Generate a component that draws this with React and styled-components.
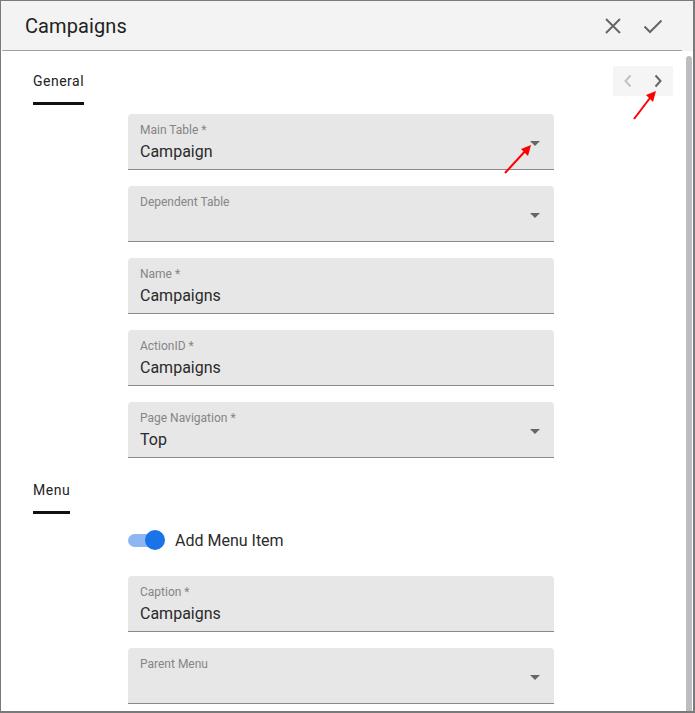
import React from 'react';
import styled, { createGlobalStyle } from 'styled-components';

const GlobalStyle = createGlobalStyle`
  html, body {
    margin: 0;
    padding: 0;
    background: #ffffff;
  }
  body {
    font-family: Roboto, 'Liberation Sans', sans-serif;
  }
`;

const Frame = styled.div`
  position: relative;
  box-sizing: border-box;
  width: 695px;
  height: 713px;
  border: 1px solid #7a7a7a;
  border-right-width: 2px;
  border-bottom-width: 2px;
  display: flex;
  flex-direction: column;
  overflow: hidden;
  background: #ffffff;
`;

const Header = styled.div`
  position: relative;
  height: 50px;
  flex-shrink: 0;
  background: #f3f3f3;
  display: flex;
  align-items: center;
  padding: 0 30px 0 24px;
  border-bottom-left-radius: 4px;

  &::after {
    content: '';
    position: absolute;
    left: 1px;
    right: 11px;
    bottom: 0;
    height: 1px;
    background: #a0a0a0;
    border-bottom-left-radius: 4px;
  }
`;

const Title = styled.h1`
  flex: 1;
  margin: 0;
  font-size: 20px;
  font-weight: 400;
  color: #222;
  letter-spacing: 0.1px;
`;

const HeaderActions = styled.div`
  display: flex;
  align-items: center;
  gap: 20px;
`;

const IconButton = styled.button`
  border: none;
  background: transparent;
  padding: 0;
  width: 20px;
  height: 20px;
  display: flex;
  align-items: center;
  justify-content: center;
  cursor: pointer;
`;

const Body = styled.div`
  flex: 1;
  display: flex;
  min-height: 0;
`;

const Content = styled.div`
  flex: 1;
  padding: 6px 13px 0 32px;
  display: flex;
  flex-direction: column;
`;

const ScrollTrack = styled.div`
  width: 6px;
  margin: 5px 1px 0 0;
  background: #bdbcc2;
  border-top-left-radius: 3px;
  border-top-right-radius: 3px;
`;

const TabRow = styled.div`
  display: flex;
  align-items: center;
  justify-content: space-between;
  margin-top: ${p => p.$top || 0}px;
`;

const Tab = styled.div`
  height: 48px;
  box-sizing: border-box;
  display: flex;
  flex-direction: column;
  justify-content: center;
  position: relative;
  font-size: 14px;
  font-weight: 400;
  letter-spacing: 0.5px;
  color: #222;

  &::after {
    content: '';
    position: absolute;
    left: 0;
    right: 0;
    bottom: 0;
    height: 3px;
    background: #111;
  }
`;

const Pager = styled.div`
  display: flex;
  width: 60px;
  height: 30px;
  background: #f5f5f5;
  align-items: center;
  justify-content: space-around;
`;

const Fields = styled.div`
  margin-left: 95px;
  width: 426px;
  display: flex;
  flex-direction: column;
  gap: 16px;
  margin-top: ${p => p.$top || 0}px;
`;

const Field = styled.div`
  position: relative;
  height: 56px;
  box-sizing: border-box;
  background: #e7e7e7;
  border-radius: 4px 4px 0 0;
  border-bottom: 1px solid #8a8a8a;
  padding: 8px 12px 0;
`;

const Label = styled.div`
  font-size: 12px;
  line-height: 16px;
  color: #858585;
`;

const Value = styled.div`
  margin-top: 2px;
  font-size: 16px;
  line-height: 24px;
  color: #2a2a2a;
  min-height: 24px;
`;

const Caret = styled.span`
  position: absolute;
  right: 14px;
  top: 27px;
  width: 0;
  height: 0;
  border-left: 5px solid transparent;
  border-right: 5px solid transparent;
  border-top: 5px solid #666;
`;

const ToggleRow = styled.div`
  margin: 14px 0 24px 95px;
  display: flex;
  align-items: center;
  gap: 10px;
  height: 24px;
  font-size: 16px;
  color: #2b2b2b;
`;

const Switch = styled.span`
  position: relative;
  width: 37px;
  height: 20px;
  display: flex;
  align-items: center;

  &::before {
    content: '';
    width: 32px;
    height: 13px;
    border-radius: 7px;
    background: #8db6f3;
  }

  &::after {
    content: '';
    position: absolute;
    right: 0;
    top: 0;
    width: 20px;
    height: 20px;
    border-radius: 50%;
    background: #1a73e8;
  }
`;

const Annotation = styled.svg`
  position: absolute;
  pointer-events: none;
  overflow: visible;
`;

const Close = () => (
  <svg width="18" height="18" viewBox="0 0 18 18">
    <path d="M2 2 L16 16 M16 2 L2 16" stroke="#666" strokeWidth="2" fill="none" />
  </svg>
);

const Check = () => (
  <svg width="20" height="16" viewBox="0 0 20 16">
    <path d="M1.5 8.5 L7 14 L18.5 2.5" stroke="#666" strokeWidth="2" fill="none" />
  </svg>
);

const Chevron = ({ dir, color }) => (
  <svg width="10" height="14" viewBox="0 0 10 14">
    <path
      d={dir === 'left' ? 'M7.5 1.5 L2.5 7 L7.5 12.5' : 'M2.5 1.5 L7.5 7 L2.5 12.5'}
      stroke={color}
      strokeWidth="2"
      fill="none"
    />
  </svg>
);

const RedArrow = ({ left, top, w, h }) => (
  <Annotation style={{ left, top }} width={w} height={h} viewBox={`0 0 ${w} ${h}`}>
    <line x1="0" y1={h} x2={w - 3} y2="3" stroke="#f00" strokeWidth="2" />
    <polygon points={`${w},0 ${w - 10},4 ${w - 3},11`} fill="#f00" />
  </Annotation>
);

const TextField = ({ label, value, select }) => (
  <Field>
    <Label>{label}</Label>
    <Value>{value}</Value>
    {select && <Caret />}
  </Field>
);

export default function App() {
  return (
    <>
      <GlobalStyle />
      <Frame>
        <Header>
          <Title>Campaigns</Title>
          <HeaderActions>
            <IconButton><Close /></IconButton>
            <IconButton><Check /></IconButton>
          </HeaderActions>
        </Header>
        <Body>
          <Content>
            <TabRow>
              <Tab>General</Tab>
              <Pager>
                <Chevron dir="left" color="#c2c2c2" />
                <Chevron dir="right" color="#666" />
              </Pager>
            </TabRow>
            <Fields $top={9}>
              <TextField label="Main Table *" value="Campaign" select />
              <TextField label="Dependent Table" value="" select />
              <TextField label="Name *" value="Campaigns" />
              <TextField label="ActionID *" value="Campaigns" />
              <TextField label="Page Navigation *" value="Top" select />
            </Fields>
            <TabRow $top={8}>
              <Tab>Menu</Tab>
            </TabRow>
            <ToggleRow>
              <Switch />
              Add Menu Item
            </ToggleRow>
            <Fields>
              <TextField label="Caption *" value="Campaigns" />
              <TextField label="Parent Menu" value="" select />
            </Fields>
          </Content>
          <ScrollTrack />
        </Body>
        <RedArrow left={504} top={144} w={26} h={28} />
        <RedArrow left={633} top={90} w={22} h={28} />
      </Frame>
    </>
  );
}
